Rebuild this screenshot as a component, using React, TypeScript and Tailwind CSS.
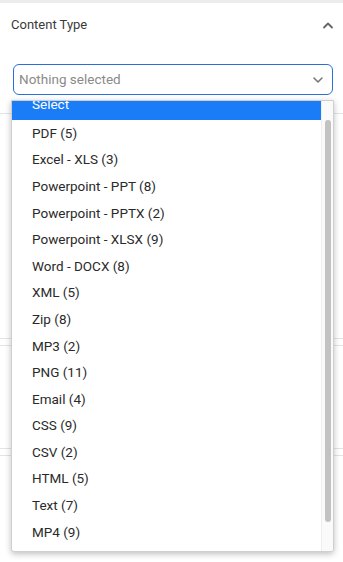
import React from "react";

const items = [
  "PDF (5)",
  "Excel - XLS (3)",
  "Powerpoint - PPT (8)",
  "Powerpoint - PPTX (2)",
  "Powerpoint - XLSX (9)",
  "Word - DOCX (8)",
  "XML (5)",
  "Zip (8)",
  "MP3 (2)",
  "PNG (11)",
  "Email (4)",
  "CSS (9)",
  "CSV (2)",
  "HTML (5)",
  "Text (7)",
  "MP4 (9)",
];

export default function App() {
  return (
    <div
      className="relative w-[343px] h-[562px] overflow-hidden bg-white"
      style={{ fontFamily: "Roboto, 'Liberation Sans', Arial, sans-serif" }}
    >
      <div className="h-[3px] bg-[#ececec]" />
      {/* Header */}
      <div className="flex items-center justify-between pl-[11px] pr-[9px] h-[44px]">
        <span className="text-[13px] text-[#3a3a3a]">Content Type</span>
        <svg width="12" height="8" viewBox="0 0 12 8" fill="none">
          <path d="M2 6.5 L6 2.5 L10 6.5" stroke="#666" strokeWidth="1.8" strokeLinecap="round" strokeLinejoin="round" />
        </svg>
      </div>
      {/* Select */}
      <div className="pl-[13px] pr-[10px] pt-[17px]">
        <div className="flex items-center justify-between h-[31px] border-[1.5px] border-[#2a6fd6] rounded-[6px] pl-[5px] pr-[8px]">
          <span className="text-[13.5px] text-[#8a8a8a]">Nothing selected</span>
          <svg width="12" height="8" viewBox="0 0 12 8" fill="none">
            <path d="M2 2 L6 6 L10 2" stroke="#777" strokeWidth="1.6" strokeLinecap="round" strokeLinejoin="round" />
          </svg>
        </div>
      </div>
      {/* Background content peeking behind the dropdown */}
      <div className="mt-[18px] border-t border-[#e4e4e4]" />
      <div className="h-[176px]" />
      <div className="mx-[11px] h-[30px] rounded-[4px] bg-[#2f6fe0]" />
      <div className="h-[18px]" />
      <div className="border-t border-[#e4e4e4]" />
      <div className="h-[6px]" />
      <div className="border-t border-[#e4e4e4]" />
      <div className="h-[102px]" />
      <div className="border-t border-[#e4e4e4]" />
      <div className="h-[6px]" />
      <div className="border-t border-[#e4e4e4]" />
      <div className="h-[78px]" />
      <div className="mx-[12px] flex h-[3px]">
        <div className="w-[113px] bg-[#2456c8]" />
        <div className="w-[50px] bg-[#dcdcdc]" />
        <div className="w-[43px] bg-[#e6e6e6]" />
      </div>

      {/* Dropdown list */}
      <div className="absolute left-[11px] top-[100px] w-[323px] h-[452px] bg-white border border-[#cfcfcf] rounded-b-[3px] shadow-[0_2px_6px_rgba(0,0,0,0.25)] flex overflow-hidden">
        <div className="flex-1 overflow-hidden">
          <div className="mt-[-8px]">
            <div className="h-[26.6px] bg-[#1a7cf7] pl-[20px] flex items-center text-[13.5px] text-white">
              <span className="-translate-y-[2px]">Select</span>
            </div>
            {items.map((t) => (
              <div key={t} className="h-[26.6px] pl-[20px] flex items-center text-[13.5px] text-[#2a2a2a]">
                {t}
              </div>
            ))}
          </div>
        </div>
        <div className="w-[12px] bg-[#fafafa] border-l border-[#eeeeee] pt-[19px] pb-[29px] flex justify-center">
          <div className="w-[6px] h-full rounded-full bg-[#c2c2c2]" />
        </div>
      </div>
    </div>
  );
}
